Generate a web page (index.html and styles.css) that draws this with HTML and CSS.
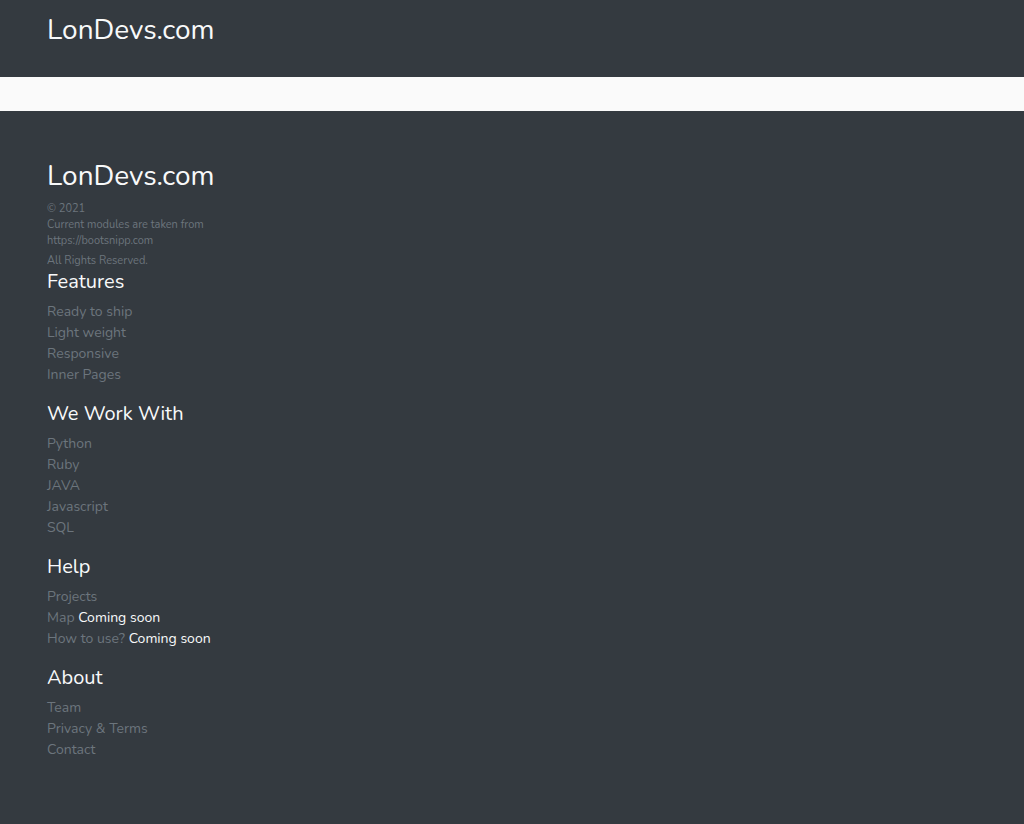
FILE: index.html
```html
<!DOCTYPE html>
<html lang="en">
<head>
<meta charset="utf-8">
<title>LonDevs.com</title>
<link rel="stylesheet" href="styles.css">
</head>
<body>
<header class="site-header">
  <a class="brand" href="#">LonDevs.com</a>
</header>
<div class="band"></div>
<footer class="site-footer">
  <div class="footer-brand">LonDevs.com</div>
  <small class="meta">© 2021</small>
  <small class="meta">Current modules are taken from<br>https://bootsnipp.com</small>
  <small class="meta rights">All Rights Reserved.</small>

  <h5 class="col-title">Features</h5>
  <ul class="links">
    <li><a href="#">Ready to ship</a></li>
    <li><a href="#">Light weight</a></li>
    <li><a href="#">Responsive</a></li>
    <li><a href="#">Inner Pages</a></li>
  </ul>

  <h5 class="col-title">We Work With</h5>
  <ul class="links">
    <li><a href="#">Python</a></li>
    <li><a href="#">Ruby</a></li>
    <li><a href="#">JAVA</a></li>
    <li><a href="#">Javascript</a></li>
    <li><a href="#">SQL</a></li>
  </ul>

  <h5 class="col-title">Help</h5>
  <ul class="links">
    <li><a href="#">Projects</a></li>
    <li><a href="#">Map</a> <span class="soon">Coming soon</span></li>
    <li><a href="#">How to use?</a> <span class="soon">Coming soon</span></li>
  </ul>

  <h5 class="col-title">About</h5>
  <ul class="links">
    <li><a href="#">Team</a></li>
    <li><a href="#">Privacy &amp; Terms</a></li>
    <li><a href="#">Contact</a></li>
  </ul>
</footer>
</body>
</html>
```
FILE: styles.css
```css
html, body {
  margin: 0;
  padding: 0;
}
body {
  font-family: "Nunito", "Lato", "Noto Sans", sans-serif;
  background: #343a40;
  color: #f8f9fa;
}
a { text-decoration: none; }

.site-header {
  height: 77px;
  box-sizing: border-box;
  padding: 13px 47px 0;
  background: #343a40;
}
.brand {
  display: inline-block;
  color: #f8f9fa;
  font-size: 28px;
  line-height: 34px;
}
.band {
  height: 34px;
  background: #fafafa;
}
.site-footer {
  padding: 48px 47px 40px;
  background: #343a40;
}
.footer-brand {
  font-size: 28px;
  line-height: 34px;
  color: #f8f9fa;
  margin-bottom: 8px;
}
.meta {
  display: block;
  font-size: 11px;
  line-height: 16px;
  color: #6c757d;
}
.meta.rights {
  margin-top: 4px;
}
.col-title {
  margin: 1px 0 7px;
  font-size: 20px;
  line-height: 24px;
  font-weight: 400;
  color: #f8f9fa;
}
.links {
  list-style: none;
  margin: 0 0 17px;
  padding: 0;
  font-size: 14px;
  line-height: 21px;
}
.links + .col-title { margin-top: 0; }
.links a { color: #6c757d; }
.soon { color: #f8f9fa; }
```
